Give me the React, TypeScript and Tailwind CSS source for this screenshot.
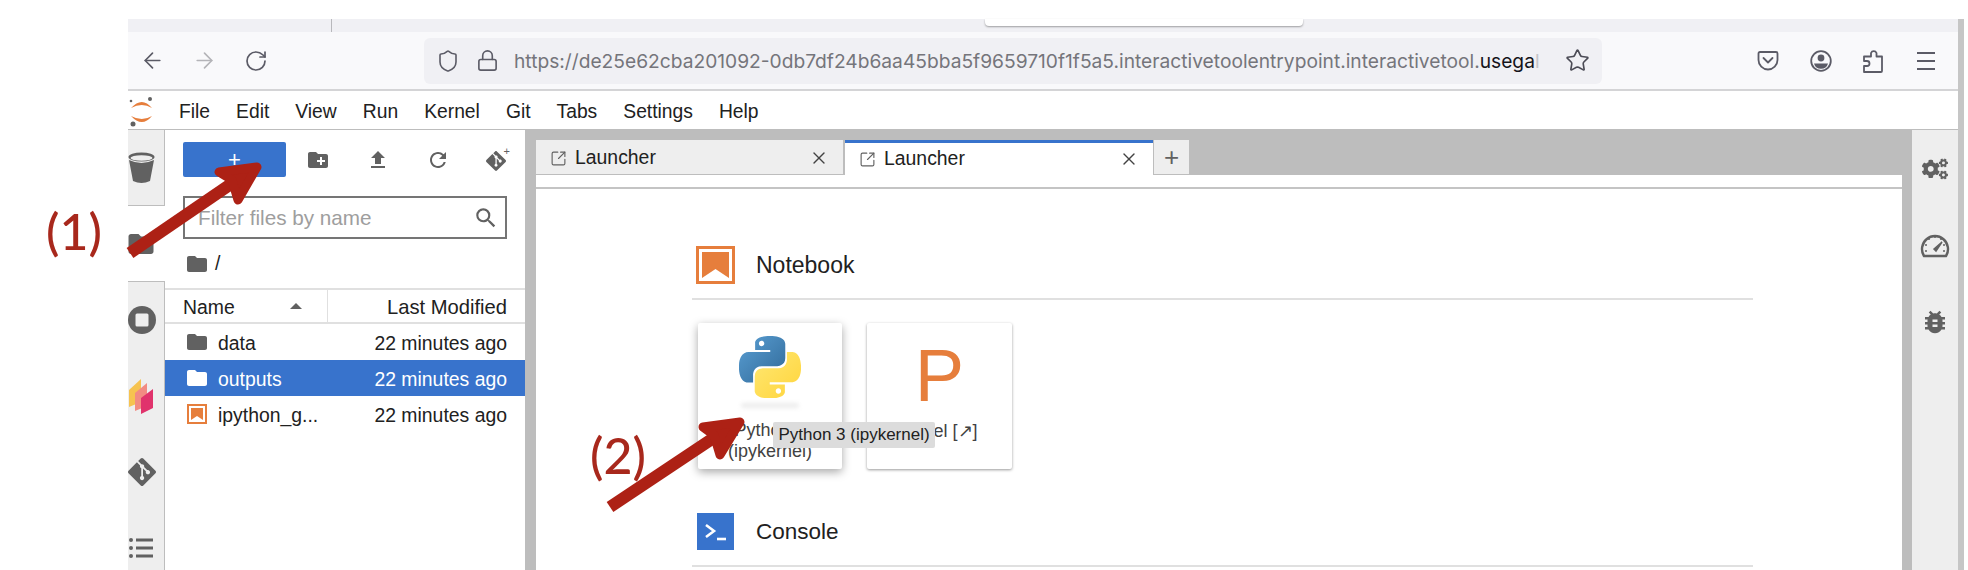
import { ArrowLeft, ArrowRight, Lock, RotateCw, Shield, SquareArrowOutUpRight, Star, X } from "lucide-react";
import { FaCogs } from "react-icons/fa";
import { MdBugReport, MdCreateNewFolder, MdFileUpload, MdFolder, MdRefresh, MdSearch } from "react-icons/md";
import { SiGit } from "react-icons/si";

const menus = ["File", "Edit", "View", "Run", "Kernel", "Git", "Tabs", "Settings", "Help"];

const JupyterLogo = () => (
  <svg width="30" height="36" viewBox="0 0 30 36" className="shrink-0">
    <path d="M3 16 Q14 4 24 16 Q14 10 3 16Z" fill="#e67e3c" />
    <path d="M3 24 Q14 36 24 24 Q14 30 3 24Z" fill="#e67e3c" />
    <circle cx="22" cy="7" r="2" fill="#616161" />
    <circle cx="3" cy="9" r="1.3" fill="#616161" />
    <circle cx="5" cy="32" r="2.5" fill="#616161" />
  </svg>
);

const Bucket = () => (
  <svg width="27" height="34" viewBox="0 0 27 34">
    <ellipse cx="13.5" cy="6" rx="13" ry="4.5" fill="#616161" />
    <ellipse cx="13.5" cy="7" rx="11" ry="2.8" fill="#eeeeee" />
    <path d="M1 9 Q13.5 15 26 9 L22 30 Q13.5 34 5 30Z" fill="#616161" />
  </svg>
);

const StopCircle = () => (
  <svg width="28" height="28" viewBox="0 0 28 28">
    <circle cx="14" cy="14" r="14" fill="#616161" />
    <rect x="7.5" y="7.5" width="13" height="13" rx="1.5" fill="#eeeeee" />
  </svg>
);

const ExtensionBooks = () => (
  <svg width="26" height="36" viewBox="0 0 26 36">
    <path d="M1 12 L13 1 V24 L1 29Z" fill="#f6c350" />
    <path d="M7 15 L19 5 V28 L7 33Z" fill="#f28b82" />
    <path d="M13 20 L25 11 V30 L13 36Z" fill="#e0336c" />
  </svg>
);

const ListIcon = () => (
  <svg width="26" height="24" viewBox="0 0 26 24" fill="#616161">
    <circle cx="3" cy="4" r="2" />
    <circle cx="3" cy="12" r="2" />
    <circle cx="3" cy="20" r="2" />
    <rect x="8" y="2.5" width="17" height="3" />
    <rect x="8" y="10.5" width="17" height="3" />
    <rect x="8" y="18.5" width="17" height="3" />
  </svg>
);

const Gauge = () => (
  <svg width="30" height="30" viewBox="0 0 30 30" fill="none">
    <path d="M4 26 A13 13 0 1 1 26 26 Z" stroke="#616161" strokeWidth="2.4" strokeLinejoin="round" />
    <path d="M14 19 L22 12 L16 21Z" fill="#616161" stroke="#616161" strokeWidth="1.5" />
    <g fill="#616161">
      <circle cx="15" cy="7" r="1" />
      <circle cx="9" cy="9" r="1" />
      <circle cx="21" cy="9" r="1" />
      <circle cx="6" cy="15" r="1" />
      <circle cx="24" cy="15" r="1" />
      <circle cx="6" cy="21" r="1" />
      <circle cx="24" cy="21" r="1" />
    </g>
  </svg>
);

const NotebookIcon = ({ size }: { size: "sm" | "lg" }) =>
  size === "lg" ? (
    <div className="w-[39px] h-[38px] border-[3px] border-[#e67e3c] bg-white p-[3px] shrink-0">
      <svg viewBox="0 0 27 26" className="w-full h-full" preserveAspectRatio="none">
        <path d="M0 0 H27 V26 L13.5 17 L0 26Z" fill="#e67e3c" />
      </svg>
    </div>
  ) : (
    <div className="w-[20px] h-[20px] border-2 border-[#e67e3c] bg-white p-[2px] shrink-0">
      <svg viewBox="0 0 12 12" className="w-full h-full" preserveAspectRatio="none">
        <path d="M0 0 H12 V12 L6 8 L0 12Z" fill="#e67e3c" />
      </svg>
    </div>
  );

const PythonLogo = () => (
  <svg width="62" height="62" viewBox="0 0 110 110">
    <defs>
      <linearGradient id="pyBlue" x1="0" y1="0" x2="1" y2="1">
        <stop offset="0" stopColor="#5a9fd4" />
        <stop offset="1" stopColor="#306998" />
      </linearGradient>
      <linearGradient id="pyYellow" x1="0" y1="0" x2="1" y2="1">
        <stop offset="0" stopColor="#ffd43b" />
        <stop offset="1" stopColor="#ffe873" />
      </linearGradient>
    </defs>
    <path
      d="M54.9 0C26.8 0 28.6 12.2 28.6 12.2l.03 12.6h26.8v3.8H17.9S-.1 26.6-.1 55s15.7 27.4 15.7 27.4h9.4V69.2s-.5-15.7 15.5-15.7h26.6s15 .24 15-14.5V14.6S84.4 0 54.9 0zM40.1 8.5c2.7 0 4.8 2.2 4.8 4.8s-2.2 4.8-4.8 4.8-4.8-2.2-4.8-4.8 2.2-4.8 4.8-4.8z"
      fill="url(#pyBlue)"
    />
    <path
      transform="rotate(180 55 55.4)"
      d="M54.9 0C26.8 0 28.6 12.2 28.6 12.2l.03 12.6h26.8v3.8H17.9S-.1 26.6-.1 55s15.7 27.4 15.7 27.4h9.4V69.2s-.5-15.7 15.5-15.7h26.6s15 .24 15-14.5V14.6S84.4 0 54.9 0zM40.1 8.5c2.7 0 4.8 2.2 4.8 4.8s-2.2 4.8-4.8 4.8-4.8-2.2-4.8-4.8 2.2-4.8 4.8-4.8z"
      fill="url(#pyYellow)"
    />
  </svg>
);

const Pocket = () => (
  <svg width="22" height="22" viewBox="0 0 22 22" fill="none" stroke="#5b5b66" strokeWidth="1.8" strokeLinecap="round" strokeLinejoin="round">
    <path d="M3 2 H19 Q20.5 2 20.5 3.5 V10 A9.5 9.5 0 0 1 1.5 10 V3.5 Q1.5 2 3 2Z" />
    <path d="M6.5 8 L11 12.5 L15.5 8" />
  </svg>
);

const Account = () => (
  <svg width="22" height="22" viewBox="0 0 22 22">
    <circle cx="11" cy="11" r="9.8" fill="none" stroke="#5b5b66" strokeWidth="1.8" />
    <circle cx="11" cy="8" r="3.4" fill="#5b5b66" />
    <path d="M4 13.5 H18 Q16.5 18.8 11 18.8 Q5.5 18.8 4 13.5Z" fill="#5b5b66" />
  </svg>
);

const Puzzle = () => (
  <svg width="22" height="24" viewBox="0 0 22 24" fill="none" stroke="#5b5b66" strokeWidth="1.8" strokeLinejoin="round">
    <path d="M2 23 V17 H5 A2.5 2.5 0 0 0 5 12 H2 V7.5 H9 V4 A3 3 0 0 1 14.5 4 V7.5 H20 V22 Q20 23 19 23Z" />
  </svg>
);

const FileRow = ({ name, selected, notebook }: { name: string; selected?: boolean; notebook?: boolean }) => (
  <div className={`h-[36px] flex items-center pl-[22px] pr-[18px] ${selected ? "bg-[#3873cc] text-white" : "text-[#212121]"}`}>
    {notebook ? <NotebookIcon size="sm" /> : <MdFolder size={24} className={`-mx-[2px] shrink-0 ${selected ? "text-white" : "text-[#616161]"}`} />}
    <span className="ml-[11px] mt-[3px] flex-1">{name}</span>
    <span className="mt-[3px]">22 minutes ago</span>
  </div>
);

const LauncherTab = ({ active }: { active?: boolean }) => (
  <div className={`w-[308px] h-[35px] flex items-center pl-[14px] pr-[14px] ${active ? "bg-white border-t-[3px] border-[#3873cc]" : "bg-[#eeeeee] border-b border-r border-[#bdbdbd] pt-[2px]"}`}>
    <SquareArrowOutUpRight size={17} strokeWidth={1.6} className="text-[#616161]" />
    <span className="ml-[8px] flex-1 text-[19.4px] text-[#212121]">Launcher</span>
    <X size={20} strokeWidth={1.6} className="text-[#424242]" />
  </div>
);

export default function App() {
  return (
    <div className="relative w-[1968px] h-[570px] bg-white overflow-hidden flex pl-[128px] pt-[19px] font-['Liberation_Sans',Arial,sans-serif]">
      <div className="w-[1830px] flex flex-col">
        {/* browser chrome */}
        <div className="h-[13px] bg-[#f0f0f4] flex items-start shrink-0">
          <div className="ml-[203px] w-[1px] h-[13px] bg-[#b8b8bc]" />
          <div className="ml-[653px] w-[318px] h-[7px] bg-white rounded-b-[4px] shadow-[0_1px_2px_rgba(0,0,0,0.35)]" />
        </div>
        <div className="h-[59px] bg-[#f9f9fb] border-b-2 border-[#d4d4d6] flex items-center shrink-0 text-[#5b5b66]">
          <ArrowLeft size={25} strokeWidth={1.6} className="ml-[12px]" />
          <ArrowRight size={25} strokeWidth={1.6} className="ml-[27px] text-[#b4b4b8]" />
          <RotateCw size={24} strokeWidth={1.7} className="ml-[27px]" />
          <div className="ml-[156px] w-[1178px] h-[46px] rounded-[6px] bg-[#f0f0f4] flex items-center">
            <Shield size={24} strokeWidth={1.6} className="ml-[12px] shrink-0" />
            <Lock size={23} strokeWidth={1.7} className="ml-[16px] shrink-0" />
            <div className="ml-[15px] pt-[1px] w-[1040px] overflow-hidden whitespace-nowrap text-[19.2px] font-['Inter',sans-serif] text-[#75757b]">
              https://de25e62cba201092-0db7df24b6aa45bba5f9659710f1f5a5.interactivetoolentrypoint.interactivetool.<span className="text-[#15141a]">usega</span>
              <span className="text-[#c4c4c8]">l</span>
            </div>
            <Star size={25} strokeWidth={1.6} className="ml-[11px] shrink-0 text-[#4b4b55]" />
          </div>
          <div className="ml-[155px]"><Pocket /></div>
          <div className="ml-[31px]"><Account /></div>
          <div className="ml-[30px]"><Puzzle /></div>
          <div className="ml-[33px] flex flex-col gap-[6px]">
            <div className="w-[18px] h-[2px] bg-[#5b5b66]" />
            <div className="w-[18px] h-[2px] bg-[#5b5b66]" />
            <div className="w-[18px] h-[2px] bg-[#5b5b66]" />
          </div>
        </div>

        {/* jupyterlab menu */}
        <div className="h-[39px] bg-white border-b border-[#bdbdbd] flex items-center shrink-0 text-[19.3px] text-[#212121]">
          <JupyterLogo />
          <div className="ml-[21px] pt-[5px] flex gap-[26px]">
            {menus.map((m) => (
              <span key={m}>{m}</span>
            ))}
          </div>
        </div>

        <div className="flex-1 flex min-h-0">
          {/* left sidebar */}
          <div className="w-[37px] shrink-0 flex flex-col bg-[#eeeeee] border-r border-[#bdbdbd]">
            <div className="h-[76px] shrink-0 flex items-center border-b border-[#bdbdbd]"><Bucket /></div>
            <div className="h-[76px] shrink-0 -mr-[1px] bg-white border-b border-[#bdbdbd] flex items-center overflow-hidden">
              <MdFolder size={30} className="-ml-[2px] text-[#616161]" />
            </div>
            <div className="h-[76px] shrink-0 flex items-center"><StopCircle /></div>
            <div className="h-[76px] shrink-0 flex items-center"><ExtensionBooks /></div>
            <div className="h-[76px] shrink-0 flex items-center overflow-hidden"><SiGit size={28} className="text-[#616161]" /></div>
            <div className="h-[76px] shrink-0 flex items-center"><ListIcon /></div>
          </div>

          {/* file browser */}
          <div className="w-[360px] shrink-0 bg-white flex flex-col text-[19.4px]">
            <div className="mt-[12px] pl-[18px] flex items-center">
              <div className="w-[103px] h-[35px] bg-[#3873cc] rounded-[2px] flex items-center justify-center text-white text-[22px]">+</div>
              <div className="ml-[20px] flex gap-[36px] text-[#616161]">
                <MdCreateNewFolder size={24} />
                <MdFileUpload size={24} />
                <MdRefresh size={24} />
                <div className="relative">
                  <SiGit size={20} className="mt-[3px]" />
                  <span className="absolute -top-[5px] -right-[4px] text-[11px]">+</span>
                </div>
              </div>
            </div>
            <div className="mt-[19px] ml-[18px] w-[324px] h-[43px] border-2 border-[#757575] flex items-center pl-[13px] pr-[6px] text-[20.7px] text-[#9e9e9e]">
              <span className="flex-1">Filter files by name</span>
              <MdSearch size={26} className="text-[#616161]" />
            </div>
            <div className="mt-[18px] h-[14px] pl-[20px] flex items-center text-[#212121]">
              <MdFolder size={24} className="text-[#616161]" />
              <span className="ml-[6px]">/</span>
            </div>
            <div className="mt-[17px] h-[36px] border-y-2 border-[#e0e0e0] flex items-center text-[#212121]">
              <div className="w-[163px] h-full pl-[18px] flex items-center border-r border-[#e0e0e0]">
                <span className="flex-1 mt-[3px]">Name</span>
                <div className="mr-[25px] w-0 h-0 border-x-[6px] border-x-transparent border-b-[6px] border-b-[#616161]" />
              </div>
              <span className="flex-1 mt-[3px] text-right pr-[18px] text-[20.2px]">Last Modified</span>
            </div>
            <FileRow name="data" />
            <FileRow name="outputs" selected />
            <FileRow name="ipython_g..." notebook />
          </div>

          {/* main area */}
          <div className="flex-1 min-w-0 bg-[#bdbdbd] flex flex-col pl-[11px] pr-[10px]">
            <div className="h-[45px] pt-[10px] flex items-start gap-[1px] shrink-0">
              <LauncherTab />
              <LauncherTab active />
              <div className="w-[35px] h-[34px] bg-[#eeeeee] flex items-center justify-center text-[#616161] text-[26px]">+</div>
            </div>
            <div className="flex-1 bg-white flex flex-col min-h-0">
              <div className="h-[14px] border-b-2 border-[#c4c4c4] shrink-0" />
              <div className="pt-[57px] ml-[156px] w-[1061px] text-[#212121]">
                <div className="flex items-center pl-[4px] pb-[14px] border-b-2 border-[#e0e0e0]">
                  <NotebookIcon size="lg" />
                  <span className="ml-[21px] text-[23px]">Notebook</span>
                </div>
                <div className="mt-[23px] ml-[6px] flex gap-[25px]">
                  <div className="w-[144px] h-[146px] bg-white rounded-[2px] flex flex-col items-center pt-[13px] shadow-[0_3px_10px_rgba(0,0,0,0.35)]">
                    <PythonLogo />
                    <div className="mt-[5px] w-[58px] h-[5px] rounded-full bg-[#ececec] blur-[2px]" />
                    <div className="mt-[12px] text-[18px] leading-[21px] text-center text-[#424242]">
                      Python 3<br />(ipykernel)
                    </div>
                  </div>
                  <div className="w-[145px] h-[146px] bg-white rounded-[2px] flex flex-col items-center shadow-[0_1px_3px_rgba(0,0,0,0.4)]">
                    <div className="h-[98px] flex items-center text-[74px] leading-none text-[#e67e3c] pt-[8px]">P</div>
                    <div className="text-[18px] leading-[21px] text-[#424242]">Panel [↗]</div>
                  </div>
                </div>
                <div className="mt-[44px] flex items-center pl-[5px] pb-[15px] border-b-2 border-[#e0e0e0]">
                  <div className="w-[37px] h-[37px] bg-[#3873cc] shrink-0 flex items-center justify-center">
                    <svg width="24" height="20" viewBox="0 0 24 20" fill="none" stroke="white" strokeWidth="2.6">
                      <path d="M2 3 L10 9 L2 15" />
                      <path d="M13 17 H22" />
                    </svg>
                  </div>
                  <span className="ml-[22px] text-[22.5px]">Console</span>
                </div>
              </div>
            </div>
          </div>

          {/* right sidebar */}
          <div className="w-[46px] shrink-0 bg-[#eeeeee] flex flex-col items-center text-[#616161]">
            <FaCogs size={26} className="mt-[26px]" />
            <div className="mt-[48px]"><Gauge /></div>
            <MdBugReport size={30} className="mt-[47px]" />
          </div>
        </div>
      </div>
      <div className="w-[6px] bg-[#c6c6c6]" />

      {/* tooltip */}
      <div className="absolute left-[773px] top-[422px] w-[162px] h-[26px] bg-[#dcdcdc] rounded-[2px] flex items-center justify-center text-[17px] text-[#212121] whitespace-nowrap">
        Python 3 (ipykernel)
      </div>

      {/* annotations */}
      <svg className="absolute left-0 top-0 pointer-events-none" width="1968" height="570" viewBox="0 0 1968 570" fill="none">
        <path d="M130 253 L250 171" stroke="#ad2115" strokeWidth="12" />
        <path d="M219 172 L257 167 L238 200 L232 180Z" fill="#ad2115" stroke="#ad2115" strokeWidth="9" strokeLinejoin="round" strokeLinecap="round" />
        <path d="M610 507 L730 427" stroke="#ad2115" strokeWidth="12" />
        <path d="M703 427 L740 422 L720 455 L714 435Z" fill="#ad2115" stroke="#ad2115" strokeWidth="9" strokeLinejoin="round" strokeLinecap="round" />
      </svg>
      <span className="absolute left-[46px] top-[205px] text-[50px] leading-[52px] font-medium text-[#a8281c] font-['Lato',sans-serif]">(1)</span>
      <span className="absolute left-[590px] top-[429px] text-[50px] leading-[52px] font-medium text-[#a8281c] font-['Lato',sans-serif]">(2)</span>
    </div>
  );
}
